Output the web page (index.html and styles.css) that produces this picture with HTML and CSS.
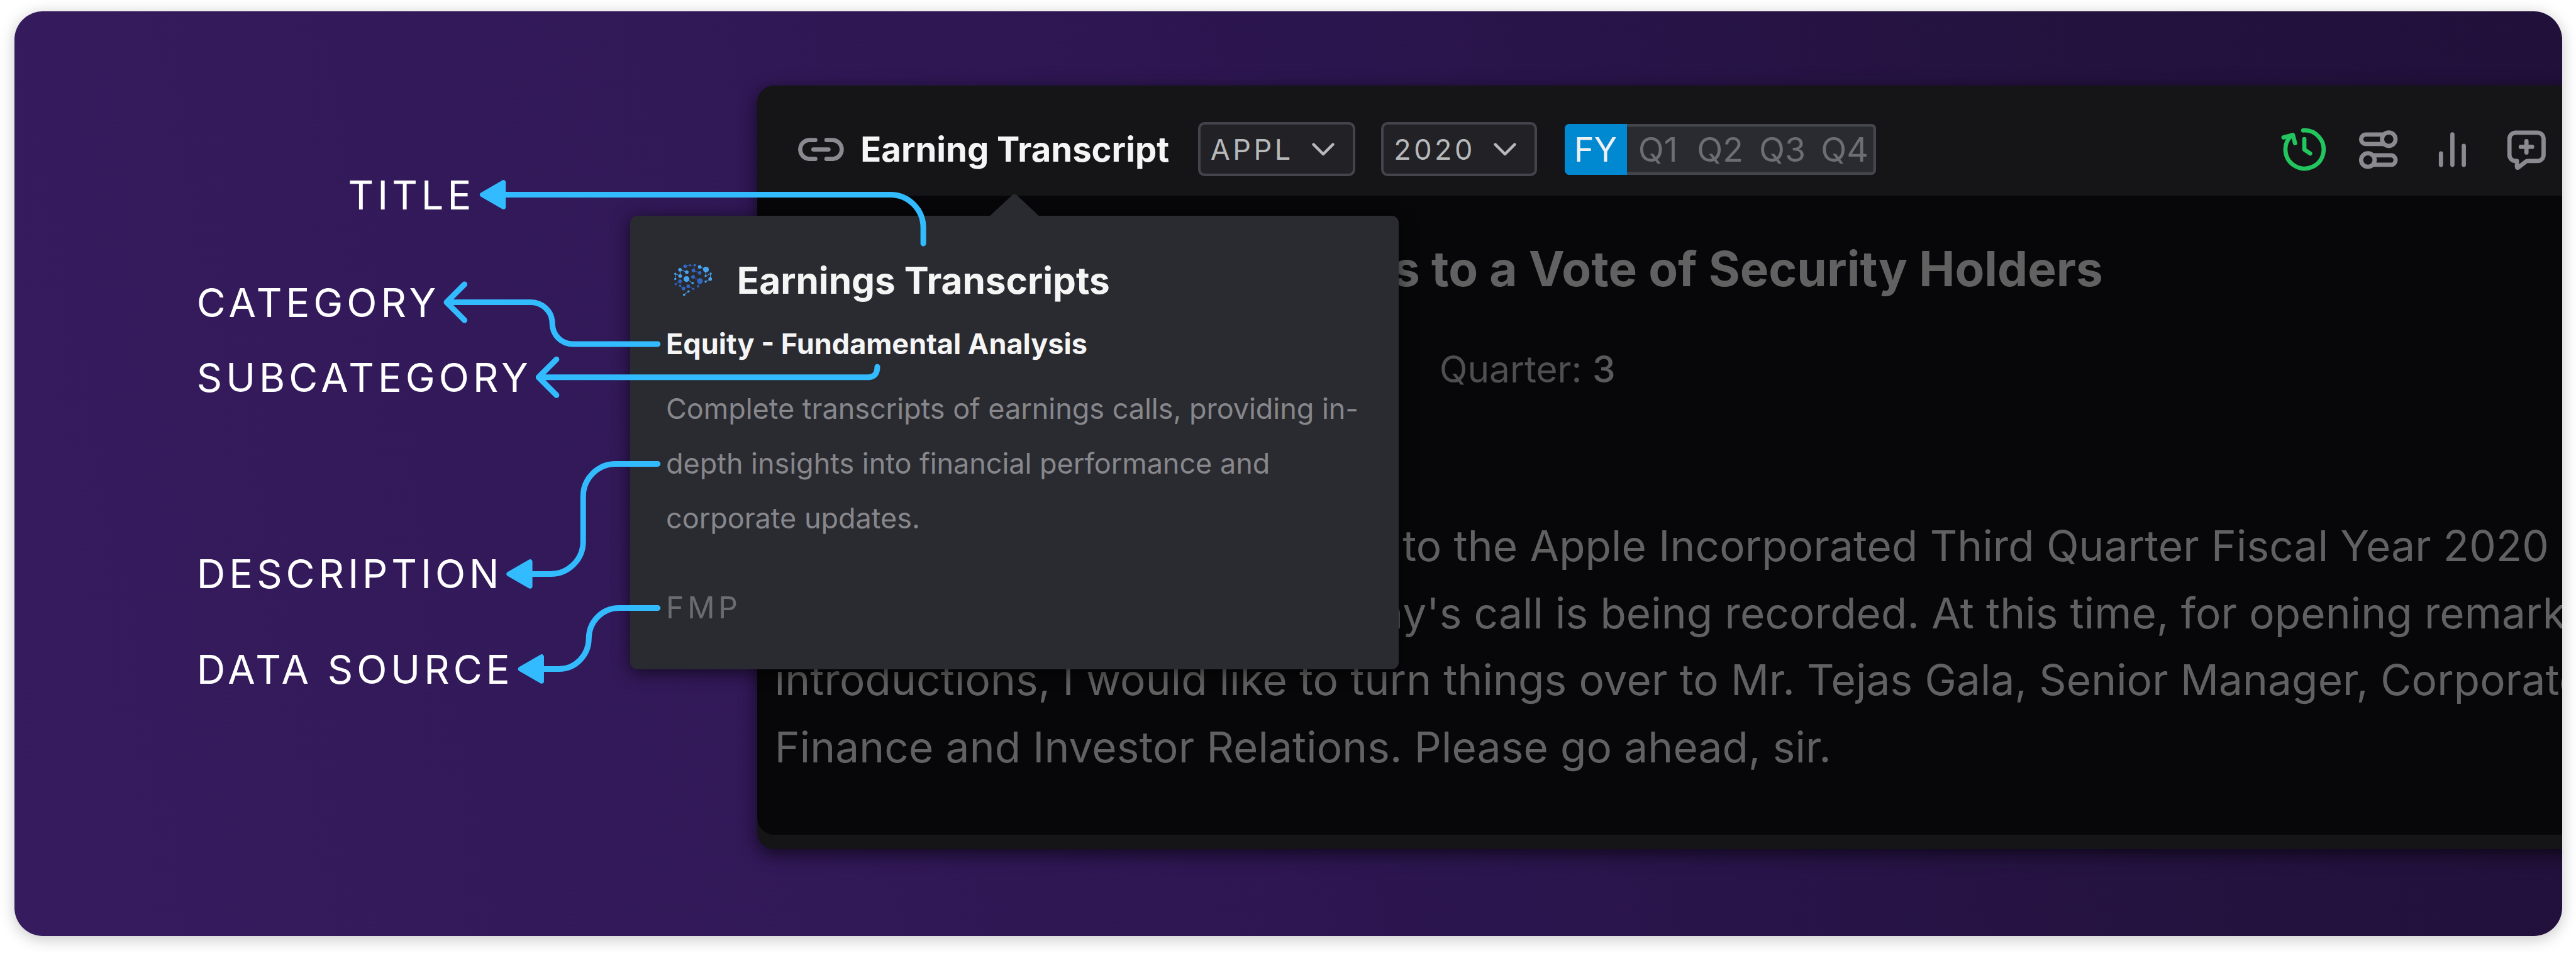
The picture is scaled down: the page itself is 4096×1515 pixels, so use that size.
FILE: index.html
```html
<!DOCTYPE html>
<html lang="en">
<head>
<meta charset="utf-8">
<title>Widget information</title>
<link rel="stylesheet" href="styles.css">
</head>
<body>
<main class="card">
  <aside class="labels">
    <div class="label label-title">TITLE</div>
    <div class="label label-category">CATEGORY</div>
    <div class="label label-subcategory">SUBCATEGORY</div>
    <div class="label label-description">DESCRIPTION</div>
    <div class="label label-source">DATA SOURCE</div>
  </aside>

  <section class="panel">
    <header class="toolbar">
      <svg class="icon link-icon" viewBox="1692 291.5 97 49.8">
        <path d="M1728.5 296.2H1716.6a20.1 20.1 0 0 0 0 40.2H1728.5M1752.2 296.2H1764.4a20.1 20.1 0 0 1 0 40.2H1752.2M1724.5 316.3H1756.5"/>
      </svg>
      <h1 class="toolbar-title">Earning Transcript</h1>
      <div class="select select-symbol">APPL<svg class="chevron" viewBox="0 0 48 28"><path d="M3.5 3.5L24 24L44.5 3.5"/></svg></div>
      <div class="select select-year">2020<svg class="chevron" viewBox="0 0 48 28"><path d="M3.5 3.5L24 24L44.5 3.5"/></svg></div>
      <div class="periods">
        <span class="period active">FY</span><span class="period">Q1</span><span class="period">Q2</span><span class="period">Q3</span><span class="period">Q4</span>
      </div>
      <svg class="icon actions" viewBox="4830 266 570 100">
        <g class="live">
          <path d="M4882.3 275.7A40.5 40.5 0 1 1 4857.5 286.5"/>
          <path d="M4840.5 290.6L4860.4 285.3L4865 302.8"/>
          <path d="M4884.7 294.3V316.3L4897 324.7"/>
        </g>
        <path d="M5051 284.5H5015.2a10 10 0 0 0 0 20H5051M5032 328.6H5068.2a10 10 0 0 1 0 20H5032"/>
        <circle cx="5063.7" cy="294.4" r="14.3"/>
        <circle cx="5019.4" cy="338.6" r="14.3"/>
        <path d="M5174.3 324.5V348.8M5198.5 284.2V348.8M5222.7 308.5V348.8"/>
        <path d="M5335.3 340.6H5332.5a13 13 0 0 1 -13-13V293.5a13 13 0 0 1 13-13H5378.8a13 13 0 0 1 13 13V327.6a13 13 0 0 1 -13 13H5358.5Q5355.5 340.6 5353 342.7L5338.5 354.3Q5335.3 356 5335.3 352.5Z"/>
        <path d="M5343.5 310.5H5367.5M5355.5 298.5V322.5"/>
      </svg>
    </header>
    <article class="document">
      <h2 class="doc-heading"><span class="lead">Submission of Matters </span>to a Vote of Security Holders</h2>
      <div class="meta"><span class="year">Year: <b>2020</b></span><span>Quarter: <b>3</b></span></div>
      <div class="speech">
        <div class="line"><span class="lead">Good day, and welcome </span>to the Apple Incorporated Third Quarter Fiscal Year 2020</div>
        <div class="line"><span class="lead lead-wide">Earnings Conference. Today's </span>call is being recorded. At this time, for opening remarks</div>
        <div class="line">introductions, I would like to turn things over to Mr. Tejas Gala, Senior Manager, Corporate</div>
        <div class="line">Finance and Investor Relations. Please go ahead, sir.</div>
      </div>
    </article>
  </section>
</main>

<div class="popup">
  <svg class="pointer" viewBox="0 0 104 47"><path d="M0 47L46 4Q52 -3 58 4L104 47Z"/></svg>
  <div class="popup-head">
    <svg class="brain" viewBox="148 115 242 207">
      <g class="deep">
        <path d="M218 132L249 126L280 124L270 159L310 174M268 199L312 226L299 260M157 246L185 227V256L207 273M237 259L270 276"/>
        <circle cx="218" cy="132" r="11.5"/><circle cx="249" cy="126" r="7"/><circle cx="280" cy="124" r="7.5"/><circle cx="270" cy="159" r="11.5"/><circle cx="310" cy="174" r="11.5"/>
        <circle cx="268" cy="199" r="11.5"/><circle cx="312" cy="226" r="18"/><circle cx="299" cy="260" r="7"/>
        <circle cx="157" cy="246" r="7"/><circle cx="185" cy="227" r="11.5"/><circle cx="185" cy="256" r="7"/><circle cx="207" cy="273" r="11.5"/><circle cx="237" cy="259" r="11.5"/><circle cx="270" cy="276" r="7"/>
      </g>
      <g class="bright">
        <path d="M310 136L350 153L348 194L379 179L377 213L348 230M228 169L185 154L186 194L155 180V213M226 213L265 239M239 292L211 313"/>
        <circle cx="310" cy="136" r="11.5"/><circle cx="350" cy="153" r="18.5"/><circle cx="348" cy="194" r="7"/><circle cx="380" cy="179" r="7"/><circle cx="377" cy="213" r="11.5"/><circle cx="348" cy="230" r="7"/>
        <circle cx="228" cy="169" r="11.5"/><circle cx="185" cy="154" r="11.5"/><circle cx="186" cy="194" r="11.5"/><circle cx="155" cy="180" r="7"/><circle cx="155" cy="213" r="7"/>
        <circle cx="226" cy="213" r="18.5"/><circle cx="265" cy="239" r="7.5"/><circle cx="239" cy="292" r="7"/><circle cx="211" cy="313" r="7.5"/>
      </g>
    </svg>
    <h3 class="popup-title">Earnings Transcripts</h3>
  </div>
  <div class="popup-category">Equity - Fundamental Analysis</div>
  <p class="popup-text">Complete transcripts of earnings calls, providing in-<br>depth insights into financial performance and<br>corporate updates.</p>
  <div class="popup-source">FMP</div>
</div>

<svg class="arrows" viewBox="0 0 5460 2019">
  <path d="M1068 412.5H1887A70 70 0 0 1 1957 482.5V516"/>
  <path d="M948 640.5H1126C1148 640.5 1170.5 659 1170.5 684.5S1190 729 1214 729H1394M984.5 602.5L946.5 640.5L984.5 678.5"/>
  <path d="M1143 799.5H1839Q1859.5 799.5 1859.5 777.5M1179.5 761.5L1141.5 799.5L1179.5 837.5"/>
  <path d="M1120 1216.3H1167A69 69 0 0 0 1236 1147.3V1052A69 69 0 0 1 1305 983H1394"/>
  <path d="M1145 1417.7H1185C1220 1417.7 1248 1388 1248 1353S1276 1288.5 1312 1288.5H1394"/>
  <g class="heads">
    <path d="M1022 412.5L1067 386.5V438.5Z"/>
    <path d="M1078.5 1216.3L1123.5 1190.3V1242.3Z"/>
    <path d="M1103 1417.7L1148 1391.7V1443.7Z"/>
  </g>
</svg>
</body>
</html>
```
FILE: styles.css
```css
/* 1rem = 100 design units; the artboard is 5460 x 2019 units */
html { font-size: calc(100vw / 54.6); }
* { box-sizing: border-box; }
body {
  margin: 0;
  width: 54.6rem;
  height: 20.19rem;
  padding: .24rem .3rem .36rem;
  position: relative;
  overflow: hidden;
  background: #fff;
  font-family: Inter, "Liberation Sans", sans-serif;
}
h1, h2, h3, p { margin: 0; }
svg { display: block; flex: none; }

.card {
  display: flex;
  align-items: flex-start;
  height: 19.59rem;
  border-radius: .6rem;
  overflow: hidden;
  background: linear-gradient(79deg, #361c5e 0%, #311857 30%, #2b154e 55%, #24123f 80%, #21103a 100%);
  box-shadow: 0 .06rem .32rem rgba(0, 0, 0, .22);
}

/* annotation labels */
.labels {
  flex: none;
  width: 15.75rem;
  padding: 3.4rem 0 0 3.87rem;
}
.label {
  height: 1rem;
  line-height: 1rem;
  font-size: .84rem;
  letter-spacing: .08rem;
  color: #fff;
  white-space: nowrap;
}
.label-title { margin-left: 3.21rem; }
.label-category { margin-top: 1.28rem; }
.label-subcategory { margin-top: .59rem; }
.label-description { margin-top: 3.16rem; }
.label-source { margin-top: 1.02rem; }

/* application panel */
.panel {
  flex: none;
  width: 39rem;
  height: 16.19rem;
  margin-top: 1.57rem;
  border-radius: .36rem;
  background: #151517;
  box-shadow: 0 .1rem .36rem rgba(0, 0, 0, .6);
}
.toolbar {
  display: flex;
  align-items: center;
  height: 2.33rem;
  padding: .38rem 0 0 .87rem;
}
.icon, .chevron {
  fill: none;
  stroke: #8b8a91;
  stroke-width: 9;
  stroke-linecap: round;
  stroke-linejoin: round;
}
.link-icon { width: .97rem; height: .498rem; }
.toolbar-title {
  width: 7.15rem;
  margin-left: .35rem;
  font-size: .725rem;
  line-height: 1rem;
  font-weight: 700;
  color: #f5f5f5;
  white-space: nowrap;
}
.select {
  display: flex;
  align-items: center;
  height: 1.145rem;
  padding: 0 .39rem 0 .215rem;
  border: .06rem solid #45444d;
  border-radius: .14rem;
  background: #212126;
  color: #b6b8ba;
  font-size: .6rem;
  letter-spacing: .06rem;
}
.select-symbol { width: 3.34rem; }
.select-year { width: 3.31rem; margin-left: .545rem; }
.chevron {
  width: .48rem;
  height: .28rem;
  margin-left: auto;
  stroke: #b6b8ba;
  stroke-width: 6;
}
.periods {
  display: flex;
  width: 6.6rem;
  height: 1.09rem;
  margin-left: .575rem;
  border-radius: .1rem;
  overflow: hidden;
  background: #2a2b30;
  box-shadow: inset 0 0 0 .06rem #45464c;
}
.period {
  flex: 1;
  line-height: 1.09rem;
  text-align: center;
  font-size: .715rem;
  color: #6d6e73;
}
.period.active { background: #0089d0; color: #f0f0f2; }
.actions { width: 5.7rem; height: 1rem; margin-left: 8.54rem; }
.live { stroke: #22c55e; }

.document {
  height: 13.55rem;
  padding: 1.06rem 0 0 .37rem;
  border-radius: 0 0 .36rem .36rem;
  background: #070709;
  color: #616161;
}
.lead { display: inline-block; width: 13.31rem; text-align: right; }
.lead-wide { width: 14.82rem; }
.doc-heading {
  height: 1rem;
  line-height: 1rem;
  font-size: 1.02rem;
  font-weight: 700;
  white-space: pre;
}
.doc-heading .lead { width: 13.92rem; }
.meta {
  display: flex;
  height: 1rem;
  margin-top: 1.115rem;
  line-height: 1rem;
  font-size: .78rem;
  color: #4f4f51;
}
.meta b { font-weight: 500; color: #5a5a5c; }
.year { width: 14.09rem; }
.speech {
  margin-top: 2.55rem;
  font-size: .9rem;
  line-height: 1.42rem;
  letter-spacing: .0018rem;
}
.line { height: 1.42rem; white-space: pre; }

/* info popup */
.popup {
  position: absolute;
  left: 13.357rem;
  top: 4.566rem;
  width: 16.293rem;
  height: 9.616rem;
  padding: .89rem 0 0 .76rem;
  border-radius: .15rem;
  background: #2a2b30;
  box-shadow: 0 .06rem .36rem rgba(0, 0, 0, .6);
  white-space: nowrap;
}
.pointer {
  position: absolute;
  left: 7.62rem;
  top: -.465rem;
  width: 1.04rem;
  height: .47rem;
  fill: #2a2b30;
}
.popup-head { display: flex; align-items: center; height: .96rem; }
.brain { width: .807rem; height: .69rem; margin-left: .175rem; stroke-width: 4; }
.brain path { fill: none; }
.deep { fill: #3068c8; stroke: #3068c8; }
.bright { fill: #48a4f0; stroke: #48a4f0; }
.brain circle { stroke: none; }
.popup-title {
  margin-left: .52rem;
  font-size: .78rem;
  font-weight: 700;
  color: #f5f5f5;
}
.popup-category {
  margin-top: .47rem;
  height: .8rem;
  line-height: .8rem;
  font-size: .6rem;
  font-weight: 700;
  color: #f5f5f5;
}
.popup-text {
  margin-top: .41rem;
  font-size: .6rem;
  line-height: 1.155rem;
  letter-spacing: -.0005rem;
  color: #87878c;
}
.popup-source {
  margin-top: .92rem;
  height: .8rem;
  line-height: .8rem;
  font-size: .64rem;
  letter-spacing: .077rem;
  color: #6b6c71;
}

/* annotation connectors */
.arrows {
  position: absolute;
  left: 0;
  top: 0;
  width: 54.6rem;
  height: 20.19rem;
  fill: none;
  stroke: #33bbff;
  stroke-width: 12;
  stroke-linecap: round;
  stroke-linejoin: round;
}
.heads { fill: #33bbff; stroke-width: 10; }
```
